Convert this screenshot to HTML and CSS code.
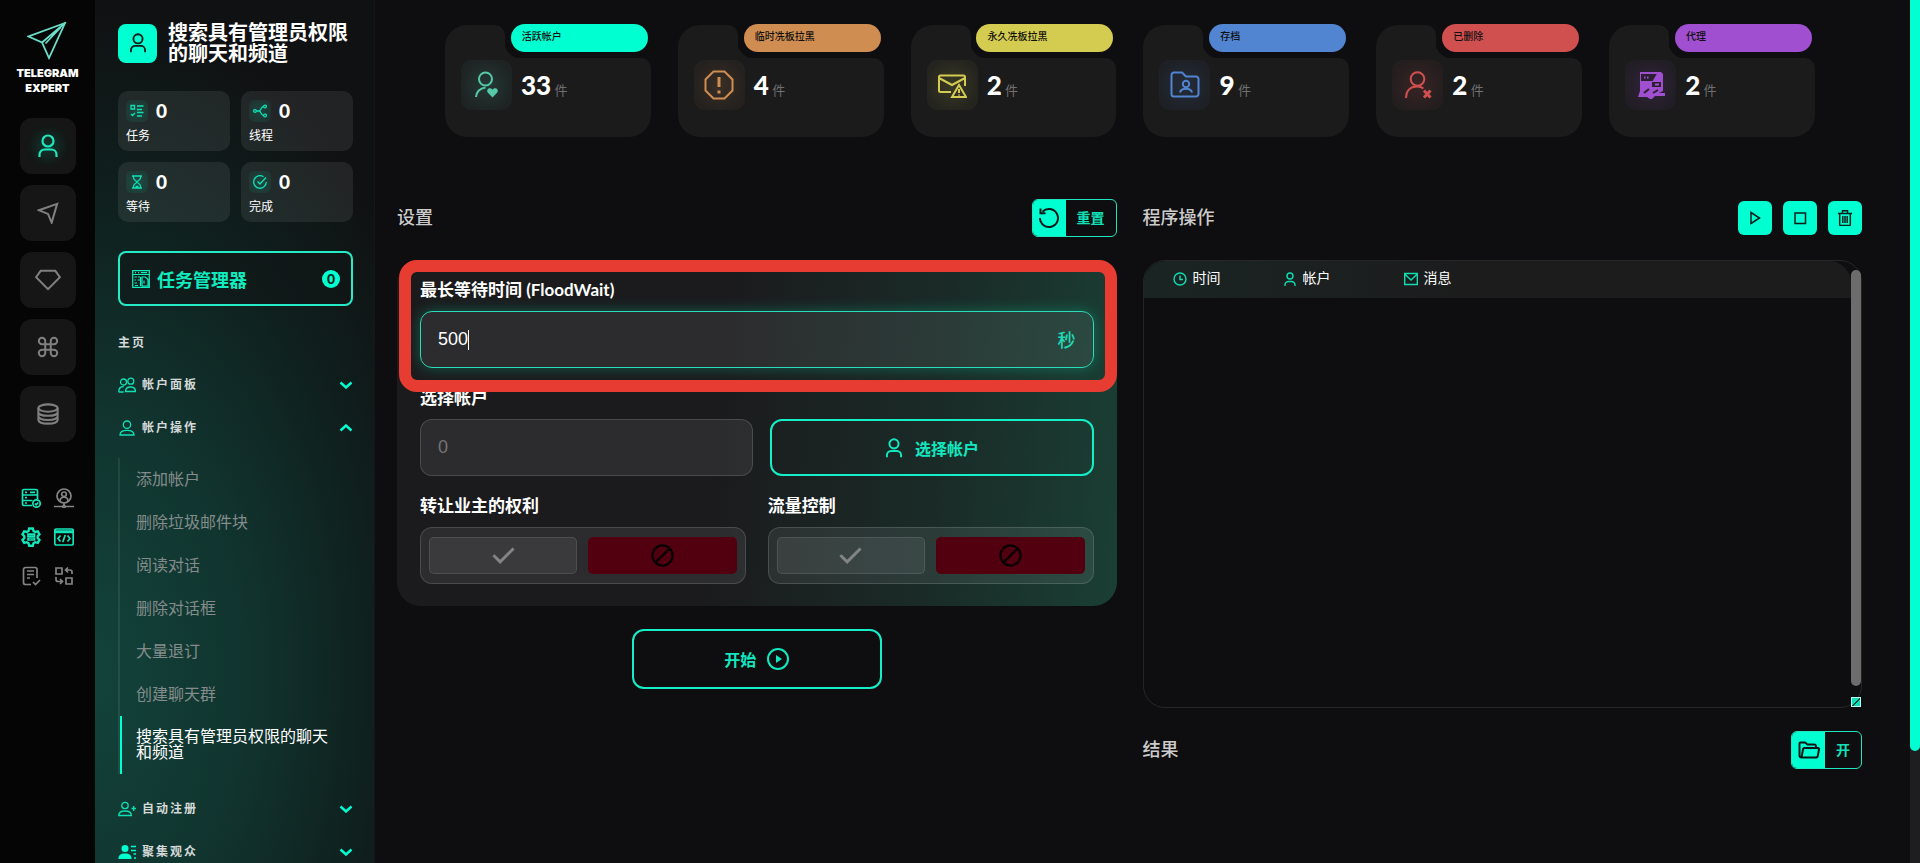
FILE: index.html
```html
<!DOCTYPE html>
<html lang="zh-CN">
<head>
    <meta charset="UTF-8">
    <meta name="viewport" content="width=device-width, initial-scale=1.0">
    <title>Telegram Expert</title>
    <link rel="stylesheet" href="styles.css">
</head>
<body>
    <svg class="sprite" aria-hidden="true">
        <symbol id="i-user" viewBox="0 0 24 24"><circle cx="12" cy="7" r="5.500"/><path d="M3.500 23v-2.500a5 5 0 0 1 5-5h7a5 5 0 0 1 5 5V23"/></symbol>
        <symbol id="i-bust" viewBox="0 0 24 24"><circle cx="12" cy="7" r="5.500"/><path d="M1.500 22.500c0-5 4-7 10.500-7s10.500 2 10.500 7z"/></symbol>
        <symbol id="i-chevron" viewBox="0 0 14 8"><path d="M1.500 1.500 7 6.500l5.500-5"/></symbol>
    </svg>

    <div class="app">
        <nav class="rail">
            <a class="logo" href="#">
                <svg viewBox="0 0 40 38"><path d="M38 1 1.500 14.500 15 20.500 22 36z"/><path d="M38 1 15 20.500M34 5 18.500 21.500"/></svg>
                <b>TELEGRAM<br>EXPERT</b>
            </a>
            <div class="railMenu">
                <button class="railBtn active" aria-label="帐户"><svg class="ico"><use href="#i-user"/></svg></button>
                <button class="railBtn" aria-label="发送"><svg class="ico" viewBox="0 0 24 24"><path d="M22 2 2 9l10 4 4 9.500z"/></svg></button>
                <button class="railBtn" aria-label="高级"><svg class="ico wide" viewBox="0 0 28 24"><path d="M6 2h16l5 7-13 13L1 9z"/></svg></button>
                <button class="railBtn" aria-label="命令"><svg class="ico" viewBox="0 0 24 24"><path d="M9 9h6v6H9zM9 9H5.500A3.500 3.500 0 1 1 9 5.500zM15 9V5.500A3.500 3.500 0 1 1 18.500 9zM15 15h3.500a3.500 3.500 0 1 1-3.500 3.500zM9 15v3.500A3.500 3.500 0 1 1 5.500 15z"/></svg></button>
                <button class="railBtn" aria-label="数据"><svg class="ico" viewBox="0 0 24 24"><ellipse cx="12" cy="5.500" rx="10.500" ry="4"/><path d="M1.500 5.500v13c0 2.300 4.500 4 10.500 4s10.500-1.700 10.500-4v-13M1.500 10c0 2.300 4.500 4 10.500 4s10.500-1.700 10.500-4M1.500 14.500c0 2.300 4.500 4 10.500 4s10.500-1.700 10.500-4"/></svg></button>
            </div>
            <div class="railTools">
                <a class="on" href="#" aria-label="服务器"><svg viewBox="0 0 20 20"><path d="M11 17.500H3a1.500 1.500 0 0 1-1.500-1.500V3A1.500 1.500 0 0 1 3 1.500h12A1.500 1.500 0 0 1 16.500 3v8M1.500 7h15M1.500 12.500h10M4 4.300h2M4 9.700h2M4 15h2M9 4.300h5"/><circle cx="15.500" cy="15.500" r="3.700"/><path d="m14 15.500 1.200 1.200 2-2.200"/></svg></a>
                <a href="#" aria-label="代理"><svg viewBox="0 0 20 20"><circle cx="10" cy="8" r="7"/><circle cx="10" cy="6.300" r="2.300"/><path d="M6 13c0-5 8-5 8 0M10 15v3M0 18.500h8M12 18.500h8"/><circle cx="10" cy="18.500" r="1.200"/></svg></a>
                <a class="on" href="#" aria-label="设置"><svg viewBox="0 0 20 20"><path class="thick" d="M8.200 1.500h3.600l.7 2.500 1.700 1 2.600-.7 1.700 3-1.800 1.900v1.800l1.800 1.900-1.700 3-2.600-.7-1.700 1-.7 2.500H8.200l-.7-2.500-1.700-1-2.600.7-1.700-3L3.300 11V9.200L1.500 7.300l1.700-3 2.600.7 1.700-1z"/><path d="M7 7.200h6.500v2H7zM7 11h6.500v2H7z"/></svg></a>
                <a class="on" href="#" aria-label="代码"><svg viewBox="0 0 20 20"><rect x=".8" y="2" width="18.400" height="16" rx="1.500"/><path d="M1 4h18M1 5.500h18M6.500 8.500 4 11.500l2.500 3M13.500 8.500l2.500 3-2.500 3M11.200 8l-2.400 7"/></svg></a>
                <a href="#" aria-label="日志"><svg viewBox="0 0 20 20"><path d="M10 18.500H4.500a2 2 0 0 1-2-2v-13a2 2 0 0 1 2-2H14a2 2 0 0 1 2 2V12M6 5h7M6 8.500h7M6 12h3M12 16l2.500 2.500L19 14"/></svg></a>
                <a href="#" aria-label="转换"><svg viewBox="0 0 20 20"><path d="M2 2h6v6H2zM12 12h6v6h-6zM18 8V6a2 2 0 0 0-2-2h-4M14 1.500 11.500 4 14 6.500M2 11v2.500a2 2 0 0 0 2 2h4M6 13l2.500 2.500L6 18"/></svg></a>
            </div>
        </nav>

        <aside class="sidebar">
            <header class="pageTitle">
                <span class="titleIcon"><svg class="ico"><use href="#i-user"/></svg></span>
                <h1>搜索具有管理员权限的聊天和频道</h1>
            </header>

            <div class="stats">
                <div class="stat">
                    <span class="statIcon"><svg viewBox="0 0 14 14"><path d="M1 1.500h3.500V5H1zM7 2h6.500M7 5.500h5M1 10l1.500 1.500L5 9M7 8.500h6.500M7 12h5"/></svg></span><b>0</b>
                    <p>任务</p>
                </div>
                <div class="stat">
                    <span class="statIcon"><svg viewBox="0 0 14 14"><circle cx="2" cy="7" r="1.400"/><circle cx="12" cy="2.500" r="1.400"/><circle cx="12" cy="11.500" r="1.400"/><path d="M3.500 7H6c2 0 2-4.500 4.500-4.500M6 7c2 0 2 4.500 4.500 4.500"/></svg></span><b>0</b>
                    <p>线程</p>
                </div>
                <div class="stat">
                    <span class="statIcon"><svg viewBox="0 0 14 14"><path d="M2 1h10M2 13h10M3.500 1v2c0 2 3.500 3 3.500 4s-3.500 2-3.500 4v2M10.500 1v2c0 2-3.500 3-3.500 4s3.500 2 3.500 4v2M5.500 11.500h3"/></svg></span><b>0</b>
                    <p>等待</p>
                </div>
                <div class="stat">
                    <span class="statIcon"><svg viewBox="0 0 14 14"><path d="M13.300 7A6.300 6.300 0 1 1 10.500 1.700M4.500 6.500 7 9l6-6.500"/></svg></span><b>0</b>
                    <p>完成</p>
                </div>
            </div>

            <button class="taskManager">
                <svg viewBox="0 0 18 18"><path d="M.7.7h16.600v16.600H.7zM.7 4.500h16.600M3 2.600h1M6 2.600h1M9 2.600h6M2.500 7H5M6 7h2M2.500 10H4M5.500 10H8M2.500 13H5M6 15.500H3M10 7h3.500L16 9.500V16h-6zM12 10.500v3M8.500 7v9"/></svg>
                <span>任务管理器</span>
                <i>0</i>
            </button>

            <p class="menuCaption">主页</p>
            <button class="menuGroup">
                <svg class="menuIcon" viewBox="0 0 18 16"><circle cx="5.500" cy="5" r="3"/><circle cx="12.800" cy="4.200" r="3"/><path d="M.7 15c0-4 1.500-5.500 5-5.500M.7 15h5M7.500 14.500c0-3.300 1.500-4.500 5-4.500s5 1.200 5 4.500z"/></svg>
                <span>帐户面板</span>
                <svg class="chevron"><use href="#i-chevron"/></svg>
            </button>
            <button class="menuGroup open">
                <svg class="menuIcon bust"><use href="#i-bust"/></svg>
                <span>帐户操作</span>
                <svg class="chevron"><use href="#i-chevron"/></svg>
            </button>
            <ul class="submenu">
                <li><a href="#">添加帐户</a></li>
                <li><a href="#">删除垃圾邮件块</a></li>
                <li><a href="#">阅读对话</a></li>
                <li><a href="#">删除对话框</a></li>
                <li><a href="#">大量退订</a></li>
                <li><a href="#">创建聊天群</a></li>
                <li class="current"><a href="#">搜索具有管理员权限的聊天和频道</a></li>
            </ul>
            <button class="menuGroup">
                <svg class="menuIcon" viewBox="0 0 18 16"><circle cx="7" cy="4.500" r="3.200"/><path d="M.7 14.500C.7 11.500 2.500 10 7 10s6.300 1.500 6.300 4.500zM13.500 7.500H18M15.700 5v5"/></svg>
                <span>自动注册</span>
                <svg class="chevron"><use href="#i-chevron"/></svg>
            </button>
            <button class="menuGroup">
                <svg class="menuIcon filled" viewBox="0 0 18 16"><circle cx="7" cy="4.500" r="3.500"/><path d="M.5 15c0-4 2-5.500 6.500-5.500s6.500 1.500 6.500 5.500z"/><path class="line" d="M13 2.500h5M13 6.500h5M15.500 10H18M16 14h2"/></svg>
                <span>聚集观众</span>
                <svg class="chevron"><use href="#i-chevron"/></svg>
            </button>
        </aside>

        <main class="content">
            <section class="counters">
                <div class="counter mint">
                    <span class="tag">活跃帐户</span>
                    <span class="counterIcon"><svg viewBox="0 0 30 30"><circle cx="13.500" cy="9" r="6.500"/><path d="M4 27c.5-5 3.500-8.500 9.500-9.500"/><path class="solid" d="M20.500 27.500 15.700 22.500c-2-3.500 2.500-6 4.800-2.800 2.300-3.200 6.800-.7 4.800 2.800z"/></svg></span>
                    <p><b>33</b> 件</p>
                </div>
                <div class="counter orange">
                    <span class="tag">临时冼板拉黑</span>
                    <span class="counterIcon"><svg viewBox="0 0 30 30"><path d="M9.500 1.500h11l8 8v11l-8 8h-11l-8-8v-11z"/><path class="thick" d="M15 7v10M15 20.500v3"/></svg></span>
                    <p><b>4</b> 件</p>
                </div>
                <div class="counter yellow">
                    <span class="tag">永久冼板拉黑</span>
                    <span class="counterIcon"><svg viewBox="0 0 30 30"><path d="M14 22H3.500A1.500 1.500 0 0 1 2 20.500V7a1.500 1.500 0 0 1 1.500-1.500h23A1.500 1.500 0 0 1 28 7v9M2 8l13 7 13-7"/><path d="m22 15 7 12H15zM22 19v4M22 24.500v1"/></svg></span>
                    <p><b>2</b> 件</p>
                </div>
                <div class="counter blue">
                    <span class="tag">存档</span>
                    <span class="counterIcon"><svg viewBox="0 0 30 30"><path d="M1.500 24V5A2.500 2.500 0 0 1 4 2.500h8l4 4h10A2.500 2.500 0 0 1 28.500 9v15a2.500 2.500 0 0 1-2.500 2.500H4A2.500 2.500 0 0 1 1.500 24z"/><circle cx="16" cy="14" r="3.200"/><path d="M10 22.500c1-5 11-5 12 0"/></svg></span>
                    <p><b>9</b> 件</p>
                </div>
                <div class="counter red">
                    <span class="tag">已删除</span>
                    <span class="counterIcon"><svg viewBox="0 0 30 30"><circle cx="14.500" cy="9" r="6.800"/><path d="M3 28c0-7 4-11.500 11-11.500 3 0 5 .8 6.500 2"/><path class="thick" d="m21 20.500 6.500 7M27.500 20.500l-6.500 7"/></svg></span>
                    <p><b>2</b> 件</p>
                </div>
                <div class="counter purple">
                    <span class="tag">代理</span>
                    <span class="counterIcon"><svg viewBox="0 0 30 30"><path class="solid" d="M4 2h21l2 2v17l-4 2h6v3H19l-3 3h-2l-3-2H2l2-6z"/><path class="cut" d="M6 5h13l-3 5H6zM17 13h7v3h-7zM13 19l-5 4M22 20l-5 3"/><path class="dots" d="M8 7.500h1.500M11 7.500h1.500M19 14.500h4"/></svg></span>
                    <p><b>2</b> 件</p>
                </div>
            </section>

            <div class="columns">
                <section>
                    <div class="sectionHead">
                        <h2>设置</h2>
                        <button class="splitBtn">
                            <span class="splitIcon"><svg viewBox="0 0 22 22"><path d="M4.500 4.800A9 9 0 1 1 2 11"/><path d="M2.500 1.500v4.800h5"/></svg></span>
                            <span class="splitText">重置</span>
                        </button>
                    </div>

                    <form class="panel">
                        <div class="highlight"></div>
                        <div class="row">
                            <div class="field">
                                <label class="fieldLabel" for="floodwait">最长等待时间 (FloodWait)</label>
                                <div class="inputBox focused">
                                    <input type="text" id="floodwait" value="500">
                                    <span class="caret"></span>
                                    <span class="unit">秒</span>
                                </div>
                            </div>
                        </div>
                        <div class="row pick">
                            <div class="field">
                                <label class="fieldLabel" for="accounts">选择帐户</label>
                                <div class="inputBox">
                                    <input type="text" id="accounts" placeholder="0">
                                </div>
                            </div>
                            <button type="button" class="outlineBtn">
                                <svg><use href="#i-user"/></svg>
                                选择帐户
                            </button>
                        </div>
                        <div class="row toggles">
                            <fieldset class="field">
                                <legend class="fieldLabel">转让业主的权利</legend>
                                <div class="toggle">
                                    <label class="yes"><input type="radio" name="owner" aria-label="是"><svg viewBox="0 0 24 18"><path d="m1.500 8.500 7 7 14-14"/></svg></label>
                                    <label class="no"><input type="radio" name="owner" aria-label="否" checked><svg viewBox="0 0 24 24"><circle cx="12" cy="12" r="10.500"/><path d="M19.500 4.500l-15 15"/></svg></label>
                                </div>
                            </fieldset>
                            <fieldset class="field">
                                <legend class="fieldLabel">流量控制</legend>
                                <div class="toggle">
                                    <label class="yes"><input type="radio" name="flow" aria-label="是"><svg viewBox="0 0 24 18"><path d="m1.500 8.500 7 7 14-14"/></svg></label>
                                    <label class="no"><input type="radio" name="flow" aria-label="否" checked><svg viewBox="0 0 24 24"><circle cx="12" cy="12" r="10.500"/><path d="M19.500 4.500l-15 15"/></svg></label>
                                </div>
                            </fieldset>
                        </div>
                    </form>

                    <button class="outlineBtn start">
                        开始
                        <svg viewBox="0 0 22 22"><circle cx="11" cy="11" r="10"/><path class="solid" d="M9 7v8l6-4z"/></svg>
                    </button>
                </section>

                <section>
                    <div class="sectionHead">
                        <h2>程序操作</h2>
                        <div class="controls">
                            <button aria-label="运行"><svg viewBox="0 0 16 16"><path d="M4 2.500v11L12.500 8z"/></svg></button>
                            <button aria-label="停止"><svg viewBox="0 0 16 16"><path d="M3 3h10.500v10.500H3z"/></svg></button>
                            <button aria-label="清除"><svg viewBox="0 0 16 16"><path d="M1 3.500h14M5.500 3V.8h5V3M2.700 4v10.500c0 .6.400 1 1 1h8.600c.6 0 1-.4 1-1V4M5.800 6v7M8 6v7M10.200 6v7"/></svg></button>
                        </div>
                    </div>

                    <div class="log">
                        <table>
                            <thead>
                                <tr>
                                    <th><svg viewBox="0 0 14 14"><circle cx="7" cy="7" r="6"/><path d="M7 3.500V7.500h3"/></svg>时间</th>
                                    <th><svg viewBox="0 0 14 14"><circle cx="7" cy="4" r="3"/><path d="M2 14v-1a3.500 3.500 0 0 1 3.500-3.500h3A3.500 3.500 0 0 1 12 13v1"/></svg>帐户</th>
                                    <th><svg viewBox="0 0 14 14"><path d="M.7 1.500h12.600v11H.7zM.7 2 7 8l6.300-6"/></svg>消息</th>
                                </tr>
                            </thead>
                        </table>
                        <span class="logThumb"></span>
                        <span class="logGrip"></span>
                    </div>

                    <div class="sectionHead">
                        <h2>结果</h2>
                        <button class="splitBtn">
                            <span class="splitIcon"><svg viewBox="0 0 22 22"><path d="M3.500 18.500a2 2 0 0 1-2-2V4.500a1 1 0 0 1 1-1H7l2.500 2H16a2 2 0 0 1 2 2V9M5 10.500A1.500 1.500 0 0 1 6.500 9H20a1 1 0 0 1 1 1.200l-1.300 7a1.500 1.500 0 0 1-1.500 1.300H3.500z"/></svg></span>
                            <span class="splitText">开</span>
                        </button>
                    </div>
                </section>
            </div>
        </main>

        <div class="pageScroll"><span></span></div>
    </div>
</body>
</html>
```
FILE: styles.css
```css
* {
    box-sizing: border-box;
}

body, html {
    height: 100%;
    margin: 0;
    overflow: hidden;
    background-color: #0e0d0f;
    color: #fff;
    font-family: Lato, "Noto Sans CJK SC", sans-serif;
}

h1, h2, p, ul, fieldset, legend {
    margin: 0;
    padding: 0;
    border: 0;
}

button {
    font-family: inherit;
    padding: 0;
    border: 0;
    background: none;
    color: inherit;
    cursor: pointer;
}

a {
    color: inherit;
    text-decoration: none;
}

svg {
    display: block;
    flex: none;
    fill: none;
    stroke: currentColor;
    stroke-width: 1.5;
}

.solid {
    fill: currentColor;
    stroke: none;
}

.sprite {
    position: absolute;
    width: 0;
    height: 0;
}

.app {
    display: grid;
    grid-template-columns: 95px 280px 1fr 10px;
    height: 100%;
}

/* left rail */
.rail {
    display: flex;
    flex-direction: column;
    align-items: center;
    padding-top: 22px;
    background-color: #050505;
    overflow: hidden;
}

.logo {
    font: 800 11px/15px Inter, sans-serif;
    text-align: center;
}

.logo svg {
    width: 40px;
    height: 38px;
    margin: 0 auto 6px;
    color: #6be0cb;
    stroke-width: 1.8;
}

.railMenu {
    display: flex;
    flex-direction: column;
    gap: 11px;
    margin-top: 22px;
}

.railBtn {
    display: flex;
    align-items: center;
    justify-content: center;
    width: 56px;
    height: 56px;
    border-radius: 12px;
    background-color: #161616;
    color: #808080;
}

.ico {
    width: 24px;
    height: 24px;
    stroke-width: 2.2;
}

.railBtn .ico {
    width: 22px;
    height: 22px;
}

.railBtn .wide {
    width: 26px;
}

.railBtn.active {
    color: #1ee6bd;
    background: radial-gradient(circle, #12372e, #131716 50%, #161616 65%);
}

.railBtn.active .ico {
    width: 24px;
    height: 24px;
}

.railTools {
    display: grid;
    grid-template-columns: 20px 20px;
    gap: 19px 13px;
    margin-top: 46px;
    color: #858585;
}

.railTools svg {
    width: 20px;
    height: 20px;
    stroke-width: 1.7;
}

.railTools .on {
    color: #12e6bb;
}

.railTools .thick {
    stroke-width: 2.4;
}

/* sidebar */
.sidebar {
    padding: 22px 21px 0 23px;
    overflow: hidden;
    border-right: 1px solid #131817;
    background: radial-gradient(ellipse 340px 580px at 0 78%, #12433a, #11342f 45%, #0f201e 82%, #101112 115%);
}

.pageTitle {
    display: flex;
    align-items: center;
    gap: 11px;
}

.titleIcon {
    display: flex;
    align-items: center;
    justify-content: center;
    flex: none;
    width: 39px;
    height: 39px;
    border-radius: 8px;
    background-color: #00ffd1;
    color: #0e1a17;
}

.titleIcon .ico {
    width: 20px;
    height: 20px;
}

.pageTitle h1 {
    font-size: 20px;
    line-height: 21px;
    font-weight: bold;
}

.stats {
    display: grid;
    grid-template-columns: 1fr 1fr;
    gap: 11px;
    margin-top: 27px;
}

.stat {
    display: grid;
    grid-template-columns: 22px 1fr;
    gap: 6px 8px;
    padding: 9px 8px 7px;
    border-radius: 10px;
    background-color: rgba(255, 255, 255, .08);
}

.stat b {
    font-size: 19px;
    line-height: 22px;
    font-weight: 900;
}

.stat p {
    grid-column: 1 / 3;
    font-size: 12px;
    line-height: 16px;
}

.statIcon {
    display: flex;
    align-items: center;
    justify-content: center;
    border-radius: 5px;
    background: radial-gradient(circle, rgba(0, 255, 200, .14), rgba(0, 255, 200, .04));
    color: #12dfb4;
}

.statIcon svg {
    width: 14px;
    height: 14px;
    stroke-width: 1.3;
}

.taskManager {
    display: flex;
    align-items: center;
    gap: 7px;
    width: 100%;
    height: 55px;
    margin-top: 29px;
    padding: 0 11px 0 12px;
    border: 2px solid #26ebc7;
    border-radius: 8px;
    background-color: rgba(16, 20, 20, .5);
    color: #0fedc0;
    font-size: 18px;
    font-weight: bold;
}

.taskManager svg {
    width: 18px;
    height: 18px;
    stroke-width: 1.2;
}

.taskManager i {
    width: 18px;
    margin-left: auto;
    border-radius: 50%;
    background-color: #00ffd1;
    color: #0e1f1b;
    font: 900 14px/18px Lato, sans-serif;
}

.menuCaption, .menuGroup {
    font-size: 12px;
    line-height: 16px;
    font-weight: bold;
    letter-spacing: 2px;
    color: #d5dad9;
}

.menuCaption {
    margin: 29px 0 12px;
}

.menuGroup {
    display: flex;
    align-items: center;
    width: 100%;
    height: 43px;
    gap: 6px;
}

.menuIcon {
    width: 18px;
    height: 16px;
    color: #10e0b5;
    stroke-width: 1.3;
}

.menuIcon.bust {
    stroke-width: 2;
}

.filled {
    fill: #00ffd1;
    stroke: none;
}

.filled .line {
    stroke: #00ffd1;
}

.chevron {
    width: 14px;
    height: 8px;
    margin-left: auto;
    color: #00ffd1;
    stroke-width: 2.4;
}

.open .chevron {
    transform: rotate(180deg);
}

.submenu {
    margin: 9px 0 13px;
    list-style: none;
    border-left: 2px solid rgba(255, 255, 255, .08);
    font-size: 16px;
    line-height: 16px;
    color: #848c8b;
}

.submenu a {
    display: block;
    padding: 13px 16px 14px;
}

.submenu .current a {
    padding: 12px 16px 14px 14px;
    border-left: 2px solid #00ffd1;
    color: #fff;
}

/* counters */
.content {
    padding: 25px 48px 0 22px;
    overflow: hidden;
}

.counters {
    display: grid;
    grid-template-columns: repeat(6, 1fr);
    gap: 27px;
    padding: 0 47px 0 48px;
}

.mint { --tone: #00ffd1; --line: #55c9a8; }
.orange { --tone: #d08d51; --line: #d08d51; }
.yellow { --tone: #d3cc51; --line: #d3cc51; }
.blue { --tone: #5184d1; --line: #5184d1; }
.red { --tone: #d05050; --line: #d05050; }
.purple { --tone: #a04fd0; --line: #a04fd0; }

.counter {
    position: relative;
    isolation: isolate;
    display: flex;
    gap: 9px;
    height: 112px;
    padding: 35px 16px 0;
    /* rounded inner corner of the notch that holds the tag */
    background: radial-gradient(circle at 100% 0, transparent 16px, #1b1b1c 17px) 60px 17px / 16px 16px no-repeat;
}

.counter::before, .counter::after {
    content: "";
    position: absolute;
    z-index: -1;
    left: 0;
    background-color: #1b1b1c;
}

.counter::before {
    top: 0;
    width: 60px;
    height: 33px;
    border-radius: 22px 10px 0 0;
}

.counter::after {
    top: 33px;
    right: 0;
    bottom: 0;
    border-radius: 0 10px 22px 22px;
}

.tag {
    position: absolute;
    top: -1px;
    right: 3px;
    width: 137px;
    height: 28px;
    padding-left: 11px;
    border-radius: 14px;
    background-color: var(--tone);
    color: #101010;
    font-size: 10px;
    line-height: 25px;
    font-weight: 500;
}

.counterIcon {
    display: flex;
    align-items: center;
    justify-content: center;
    flex: none;
    width: 51px;
    height: 50px;
    border-radius: 11px;
    color: var(--line);
    background: radial-gradient(circle, color-mix(in srgb, var(--line) 17%, #1b1b1c), color-mix(in srgb, var(--line) 5%, #1b1b1c) 75%);
}

.counterIcon svg {
    width: 30px;
    height: 30px;
    stroke-width: 2;
}

.counterIcon .thick {
    stroke-width: 3;
}

.counterIcon .cut {
    fill: #2a2030;
    stroke: #2a2030;
}

.counter p {
    color: #707070;
    font-size: 13px;
    line-height: 50px;
}

.counter b {
    color: #fff;
    font-size: 26px;
    font-weight: 900;
}

/* settings */
.columns {
    display: grid;
    grid-template-columns: 1fr 1fr;
    gap: 26px;
    margin-top: 62px;
}

.sectionHead {
    display: flex;
    align-items: center;
    justify-content: space-between;
    height: 38px;
    margin-bottom: 23px;
}

.sectionHead h2 {
    padding-bottom: 2px;
    color: #cbcbcb;
    font-size: 18px;
    line-height: 24px;
    font-weight: 500;
}

.splitBtn {
    display: flex;
    height: 38px;
    border: 1px solid #1fe6c0;
    border-radius: 6px;
    overflow: hidden;
    color: #12e0b8;
    font-size: 14px;
    font-weight: bold;
}

.splitIcon {
    display: flex;
    align-items: center;
    justify-content: center;
    width: 33px;
    height: 100%;
    background-color: #00ffd1;
    color: #0e1715;
}

.splitIcon svg {
    width: 22px;
    height: 22px;
    stroke-width: 2;
}

.splitText {
    padding: 0 11px;
    line-height: 36px;
}

.panel {
    position: relative;
    display: flex;
    flex-direction: column;
    gap: 18px;
    padding: 18px 23px 22px;
    border-radius: 24px;
    background: linear-gradient(95deg, #1b1b1d 45%, #1a2b27 74%, #1a3f34);
}

.highlight {
    position: absolute;
    z-index: 1;
    inset: 0 0 auto 2px;
    height: 132px;
    border: 12px solid #e63c32;
    border-radius: 18px;
    pointer-events: none;
}

.row {
    display: grid;
    align-items: end;
}

.pick {
    grid-template-columns: 333fr 324fr;
    gap: 17px;
}

.toggles {
    grid-template-columns: 1fr 1fr;
    gap: 22px;
}

.fieldLabel {
    display: block;
    margin-bottom: 9px;
    font-size: 17px;
    line-height: 24px;
    font-weight: bold;
}

.inputBox {
    position: relative;
    display: flex;
    align-items: center;
    height: 57px;
    padding: 0 17px;
    border: 1px solid rgba(255, 255, 255, .14);
    border-radius: 12px;
    background-color: rgba(255, 255, 255, .08);
}

.inputBox input {
    flex: 1;
    min-width: 0;
    padding: 0;
    border: 0;
    outline: none;
    background: none;
    color: #fff;
    font: 18px "Liberation Sans", sans-serif;
}

.inputBox input::placeholder {
    color: #757576;
}

.focused {
    border-color: #2adcb8;
    box-shadow: 0 0 14px rgba(0, 230, 180, .32);
}

.caret {
    position: absolute;
    left: 47px;
    width: 1px;
    height: 20px;
    background-color: #fff;
}

.unit {
    color: #1fd9b4;
    font-size: 18px;
    line-height: 24px;
    font-weight: 500;
}

.outlineBtn {
    display: flex;
    align-items: center;
    justify-content: center;
    gap: 11px;
    height: 57px;
    border: 2px solid #14efc8;
    border-radius: 12px;
    color: #12e8c0;
    font-size: 16px;
    font-weight: bold;
}

.outlineBtn svg {
    width: 20px;
    height: 20px;
    stroke-width: 2.4;
}

.start {
    width: 250px;
    height: 60px;
    margin: 23px auto 0;
}

.start svg {
    width: 22px;
    height: 22px;
    stroke-width: 2;
}

.toggle {
    display: grid;
    grid-template-columns: 1fr 1fr;
    gap: 11px;
    height: 57px;
    padding: 9px 8px;
    border: 1px solid rgba(255, 255, 255, .14);
    border-radius: 12px;
    background-color: rgba(255, 255, 255, .08);
}

.toggle label {
    display: flex;
    align-items: center;
    justify-content: center;
    border-radius: 5px;
    cursor: pointer;
}

.toggle input {
    position: absolute;
    opacity: 0;
}

.toggle svg {
    width: 23px;
    stroke-width: 2.4;
}

.yes {
    border: 1px solid rgba(255, 255, 255, .1);
    background-color: rgba(255, 255, 255, .07);
    color: #838484;
}

.yes svg {
    stroke-width: 3;
}

.no {
    background-color: #52000f;
    color: #0a0003;
}

/* log */
.controls {
    display: flex;
    gap: 11px;
}

.controls button {
    display: flex;
    align-items: center;
    justify-content: center;
    width: 34px;
    height: 34px;
    border-radius: 6px;
    background-color: #00ffd1;
    color: #0b1f1a;
}

.controls svg {
    width: 16px;
    height: 16px;
}

.log {
    position: relative;
    height: 448px;
    margin-bottom: 23px;
    padding-right: 10px;
    border: 1px solid #262628;
    border-radius: 22px;
}

.log table {
    width: 100%;
    border-spacing: 0;
    border-radius: 22px 22px 0 0;
    background: linear-gradient(90deg, #1a2523, #1c1c1d 45%);
}

.log th {
    height: 37px;
    padding: 0 0 3px;
    text-align: left;
    font-size: 14px;
    line-height: 34px;
    font-weight: 400;
}

.log th:first-child {
    width: 139px;
    padding-left: 29px;
}

.log th:nth-child(2) {
    width: 121px;
}

.log th svg {
    display: inline-block;
    width: 14px;
    height: 14px;
    margin-right: 6px;
    vertical-align: -3px;
    color: #10dcb2;
    stroke-width: 1.4;
}

.logThumb {
    position: absolute;
    top: 9px;
    right: 0;
    width: 10px;
    height: 416px;
    border-radius: 5px;
    background-color: #6c6c6c;
}

.logGrip {
    position: absolute;
    right: 0;
    bottom: 0;
    width: 10px;
    height: 10px;
    border: 1px solid #b8fff0;
    background: linear-gradient(135deg, #10e0b8 45%, #0b4a3e 45% 60%, #10e0b8 60%);
}

/* page scrollbar */
.pageScroll {
    background-color: #1e1d20;
}

.pageScroll span {
    display: block;
    height: 87%;
    border-radius: 0 0 5px 5px;
    background-color: #00ffd1;
}
```
